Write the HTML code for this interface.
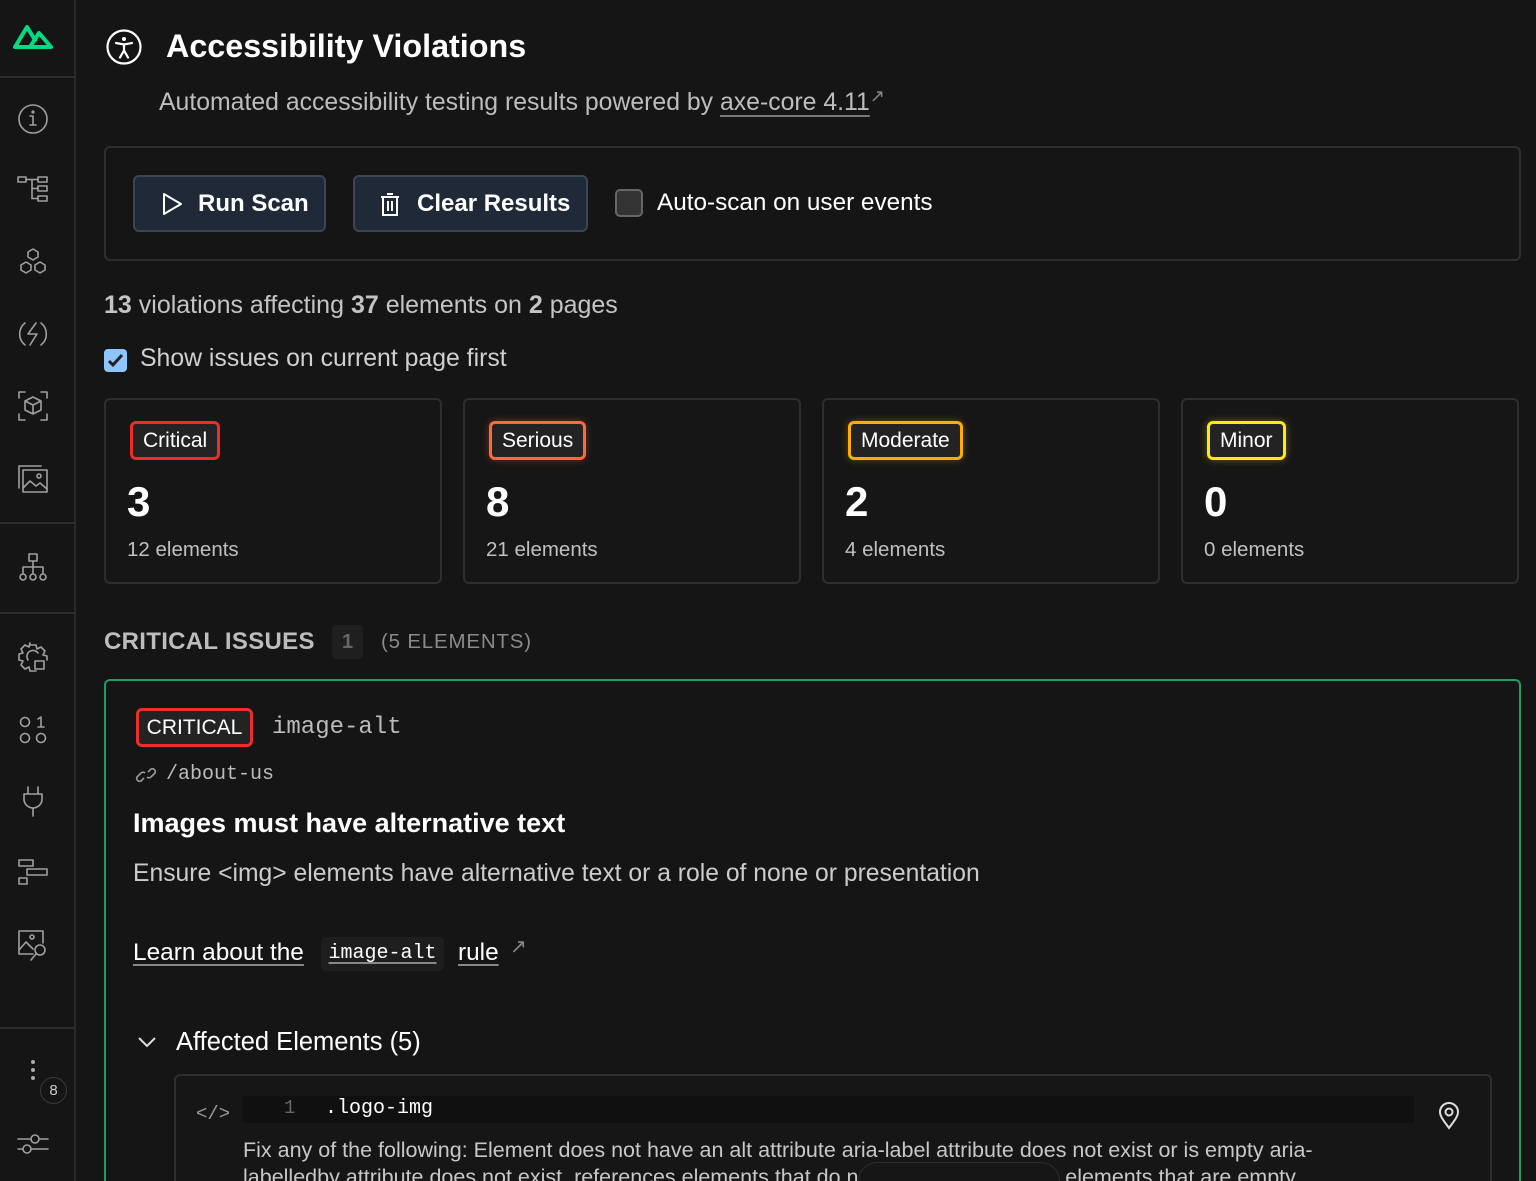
<!DOCTYPE html>
<html><head><meta charset="utf-8"><style>
*{box-sizing:border-box;margin:0;padding:0}
html{width:1536px;height:1181px;overflow:hidden}
body{width:1536px;height:1181px;overflow:hidden;background:#151515;font-family:"Liberation Sans",sans-serif;color:#e8e8e8;position:relative}
.abs{position:absolute}
.side{left:0;top:0;width:76px;height:1181px;background:#151515;border-right:2px solid #2a2a2a}
.hl{position:absolute;left:0;width:75px;height:2px;background:#2c2c2c}
.ic{position:absolute;left:16px;width:34px;height:34px}
.ic svg{width:34px;height:34px;fill:none;stroke:#a0a0a0;stroke-width:1.6;stroke-linecap:round;stroke-linejoin:round}
.box{border:2px solid #2e2e2e;border-radius:6px}
.btn{position:absolute;top:175px;height:57px;background:#1f2937;border:2px solid #3a4556;border-radius:6px;color:#fff;font-size:24px;font-weight:bold;display:flex;align-items:center}
.card{position:absolute;top:398px;width:338px;height:186px;border:2px solid #2e2e2e;border-radius:6px;background:#161616}
.badge{position:absolute;left:24px;top:21px;height:39px;border:3px solid;border-radius:6px;background:#232323;color:#fff;font-size:21px;padding:0 10px;line-height:33px}
.num{position:absolute;left:21px;top:78px;font-size:42px;font-weight:bold;color:#fff}
.el{position:absolute;left:21px;top:138px;font-size:20.5px;color:#c0c0c0}
.mono{font-family:"Liberation Mono","DejaVu Sans Mono",monospace}
</style></head><body>
<div class="abs side">
 <svg class="abs" style="left:12px;top:22px" width="42" height="28" viewBox="0 0 42 28"><path d="M3 25 L15 5 L23 18 M18 25 L27 11 L39 25 Z M3 25 H18" fill="none" stroke="#00dc82" stroke-width="4" stroke-linejoin="round" stroke-linecap="round"/></svg>
 <div class="hl" style="top:76px"></div>
 <div class="ic" style="top:102px"><svg viewBox="0 0 34 34"><circle cx="17" cy="17" r="14"/><path d="M17 14v9M14 23h6M14 14h3"/><circle cx="17" cy="10" r=".8"/></svg></div>
 <div class="ic" style="top:173px"><svg viewBox="0 0 34 34"><rect x="2" y="4" width="8" height="5"/><rect x="22" y="4" width="9" height="5"/><rect x="22" y="13" width="9" height="5"/><rect x="22" y="23" width="9" height="5"/><path d="M10 6.5h12M16 6.5v19h6M16 15.5h6"/></svg></div>
 <div class="ic" style="top:246px"><svg viewBox="0 0 34 34"><path d="M17 3l5 3v5l-5 3-5-3V6z M10 16l5 3v5l-5 3-5-3v-5z M24 16l5 3v5l-5 3-5-3v-5z"/></svg></div>
 <div class="ic" style="top:317px"><svg viewBox="0 0 34 34"><path d="M9 6a14 14 0 0 0 0 22M25 6a14 14 0 0 1 0 22M20 6l-8 11h9l-7 11"/></svg></div>
 <div class="ic" style="top:389px"><svg viewBox="0 0 34 34"><path d="M3 9V3h6M25 3h6v6M31 25v6h-6M9 31H3v-6M17 8l8 4v9l-8 4-8-4v-9zM9 12l8 4 8-4M17 16v9"/></svg></div>
 <div class="ic" style="top:461px"><svg viewBox="0 0 34 34"><path d="M3 27V5h22"/><rect x="7" y="9" width="24" height="22"/><circle cx="23" cy="15" r="2"/><path d="M7 27l7-7 6 5 4-3 7 6"/></svg></div>
 <div class="hl" style="top:522px"></div>
 <div class="ic" style="top:552px"><svg viewBox="0 0 34 34"><rect x="13" y="2" width="8" height="7"/><path d="M17 9v6M7 21v-6h20v6M17 15v6"/><circle cx="7" cy="25" r="3"/><circle cx="17" cy="25" r="3"/><circle cx="27" cy="25" r="3"/></svg></div>
 <div class="hl" style="top:612px"></div>
 <div class="ic" style="top:641px"><svg viewBox="0 0 34 34"><path d="M14 4h6l1 4 4-2 4 4-2 4 4 1v4M20 30h-6l-1-4-4 2-4-4 2-4-4-1v-6l4-1-2-4 4-4 4 2 1-4"/><path d="M12 19a6 6 0 0 1 10-7"/><rect x="19" y="20" width="9" height="8"/></svg></div>
 <div class="ic" style="top:713px"><svg viewBox="0 0 34 34"><circle cx="9" cy="9" r="4.5"/><path d="M22 6l3-2v10M22 14h6"/><circle cx="9" cy="25" r="4.5"/><circle cx="25" cy="25" r="4.5"/></svg></div>
 <div class="ic" style="top:784px"><svg viewBox="0 0 34 34"><path d="M12 3v7M22 3v7M8 10h18v5a9 9 0 0 1-18 0zM17 24v8"/></svg></div>
 <div class="ic" style="top:856px"><svg viewBox="0 0 34 34"><rect x="3" y="4" width="14" height="6"/><rect x="11" y="13" width="20" height="6"/><rect x="3" y="22" width="8" height="6"/></svg></div>
 <div class="ic" style="top:928px"><svg viewBox="0 0 34 34"><path d="M17 26H3V3h24v12"/><circle cx="16" cy="9" r="2"/><path d="M3 22l7-8 7 7"/><circle cx="24" cy="22" r="5"/><path d="M20 26l-5 6"/></svg></div>
 <div class="hl" style="top:1027px"></div>
 <div class="abs" style="left:31px;top:1060px;width:4px;height:4px;border-radius:2px;background:#aaa"></div>
 <div class="abs" style="left:31px;top:1068px;width:4px;height:4px;border-radius:2px;background:#aaa"></div>
 <div class="abs" style="left:31px;top:1076px;width:4px;height:4px;border-radius:2px;background:#aaa"></div>
 <div class="abs" style="left:40px;top:1077px;width:27px;height:27px;border-radius:14px;border:1px solid #3a3a3a;color:#ccc;font-size:15px;text-align:center;line-height:25px">8</div>
 <div class="ic" style="top:1128px"><svg viewBox="0 0 34 34"><path d="M2 11h13M23 11h9M2 21h5M15 21h17"/><circle cx="19" cy="11" r="4"/><circle cx="11" cy="21" r="4"/></svg></div>
</div>

<svg class="abs" style="left:105px;top:28px" width="38" height="38" viewBox="0 0 38 38"><g fill="none" stroke="#fff" stroke-width="2.2" stroke-linecap="round"><circle cx="19" cy="19" r="16.5"/><path d="M11 15l8 1.5 8-1.5M19 16.5v6M19 22.5l-4 7M19 22.5l4 7"/></g><circle cx="19" cy="11" r="2" fill="#fff"/></svg>
<div class="abs" style="left:166px;top:28px;font-size:32.3px;font-weight:bold;color:#fff">Accessibility Violations</div>
<div class="abs" style="left:159px;top:86px;font-size:24.8px;color:#bdbdbd">Automated accessibility testing results powered by <span style="text-decoration:underline;text-decoration-color:#777;text-underline-offset:5px">axe-core 4.11</span><span style="font-size:18px;color:#888;vertical-align:8px">↗</span></div>

<div class="abs box" style="left:104px;top:146px;width:1417px;height:115px"></div>
<div class="btn" style="left:133px;width:193px"><svg style="margin:0 15px 0 26px" width="22" height="24" viewBox="0 0 22 24"><path d="M3 2l17 10L3 22z" fill="none" stroke="#fff" stroke-width="2" stroke-linejoin="round"/></svg>Run Scan</div>
<div class="btn" style="left:353px;width:235px"><svg style="margin:0 16px 0 24px" width="22" height="26" viewBox="0 0 22 26"><path d="M2 6h18M8 3h6M4 6v18h14V6M9 10v10M13 10v10" fill="none" stroke="#fff" stroke-width="2"/></svg>Clear Results</div>
<div class="abs" style="left:615px;top:189px;width:28px;height:28px;border:2px solid #666;border-radius:5px;background:#333"></div>
<div class="abs" style="left:657px;top:189px;font-size:24.3px;color:#fff">Auto-scan on user events</div>

<div class="abs" style="left:104px;top:291px;font-size:25px;color:#c4c4c4"><b>13</b> violations affecting <b>37</b> elements on <b>2</b> pages</div>
<div class="abs" style="left:104px;top:349px;width:23px;height:23px;border-radius:4px;background:#8ec5ff"><svg width="23" height="23" viewBox="0 0 23 23"><path d="M5 12l4 4 9-10" fill="none" stroke="#222" stroke-width="3"/></svg></div>
<div class="abs" style="left:140px;top:345px;font-size:24.8px;color:#d0d0d0">Show issues on current page first</div>

<div class="card" style="left:104px"><div class="badge" style="border-color:#ef2b2b">Critical</div><div class="num">3</div><div class="el">12 elements</div></div>
<div class="card" style="left:463px"><div class="badge" style="border-color:#ff6a3d;box-shadow:0 0 8px rgba(255,106,61,.35)">Serious</div><div class="num">8</div><div class="el">21 elements</div></div>
<div class="card" style="left:822px"><div class="badge" style="border-color:#ffae00;box-shadow:0 0 8px rgba(255,174,0,.35)">Moderate</div><div class="num">2</div><div class="el">4 elements</div></div>
<div class="card" style="left:1181px"><div class="badge" style="border-color:#ffe81a;box-shadow:0 0 8px rgba(255,232,26,.35)">Minor</div><div class="num">0</div><div class="el">0 elements</div></div>

<div class="abs" style="left:104px;top:628px;font-size:24px;font-weight:bold;color:#bdbdbd;letter-spacing:.3px">CRITICAL ISSUES</div>
<div class="abs" style="left:332px;top:625px;width:31px;height:34px;border-radius:4px;background:#1f1f1f;color:#666;font-size:20px;text-align:center;line-height:34px;font-weight:bold">1</div>
<div class="abs" style="left:381px;top:630px;font-size:20.5px;color:#8a8a8a;letter-spacing:.8px">(5 ELEMENTS)</div>

<div class="abs" style="left:104px;top:679px;width:1417px;height:502px;border:2px solid #1f9e63;border-bottom:none;border-radius:6px 6px 0 0"></div>
<div class="abs" style="left:136px;top:708px;width:117px;height:39px;border:3px solid #ef2b2b;border-radius:6px;background:#232323;color:#fff;font-size:21px;text-align:center;line-height:33px">CRITICAL</div>
<div class="abs mono" style="left:272px;top:714px;font-size:24px;color:#bbb">image-alt</div>
<svg class="abs" style="left:134px;top:766px" width="24" height="18" viewBox="0 0 24 18"><g fill="none" stroke="#999" stroke-width="1.6"><path d="M10 12l-3 3a3 3 0 0 1-4-4l4-4a3 3 0 0 1 4 0M14 6l3-3a3 3 0 0 1 4 4l-4 4a3 3 0 0 1-4 0"/></g></svg>
<div class="abs mono" style="left:166px;top:763px;font-size:20px;color:#bbb">/about-us</div>
<div class="abs" style="left:133px;top:808px;font-size:27px;font-weight:bold;color:#fff">Images must have alternative text</div>
<div class="abs" style="left:133px;top:860px;font-size:24.7px;color:#ccc">Ensure &lt;img&gt; elements have alternative text or a role of none or presentation</div>
<div class="abs" style="left:133px;top:939px;font-size:24.4px;color:#fff;text-decoration:underline;text-decoration-color:#888;text-underline-offset:4px">Learn about the</div>
<div class="abs mono" style="left:321px;top:937px;width:123px;height:34px;border-radius:5px;background:#1e1e1e;font-size:20px;color:#fff;text-align:center;line-height:34px"><span style="text-decoration:underline;text-decoration-color:#888;text-underline-offset:4px">image-alt</span></div>
<div class="abs" style="left:458px;top:939px;font-size:24.4px;color:#fff;text-decoration:underline;text-decoration-color:#888;text-underline-offset:4px">rule</div>
<div class="abs" style="left:510px;top:934px;font-size:20px;color:#888">↗</div>

<svg class="abs" style="left:137px;top:1035px" width="20" height="14" viewBox="0 0 20 14"><path d="M2 3l8 8 8-8" fill="none" stroke="#ddd" stroke-width="2"/></svg>
<div class="abs" style="left:176px;top:1028px;font-size:25.5px;color:#fff">Affected Elements (5)</div>

<div class="abs" style="left:174px;top:1074px;width:1318px;height:107px;border:2px solid #2e2e2e;border-bottom:none;border-radius:6px 6px 0 0;background:#161616"></div>
<div class="abs mono" style="left:196px;top:1103px;font-size:19px;color:#999">&lt;/&gt;</div>
<div class="abs" style="left:243px;top:1096px;width:1171px;height:27px;background:#101010"></div>
<div class="abs mono" style="left:284px;top:1097px;font-size:19px;color:#666">1</div>
<div class="abs mono" style="left:325px;top:1097px;font-size:20px;color:#fff">.logo-img</div>
<svg class="abs" style="left:1438px;top:1102px" width="22" height="28" viewBox="0 0 22 28"><g fill="none" stroke="#ddd" stroke-width="2"><path d="M11 26C5 18 2 14 2 10a9 9 0 0 1 18 0c0 4-3 8-9 16z"/><circle cx="11" cy="10" r="3.5"/></g></svg>
<div class="abs" style="left:243px;top:1137px;width:1100px;height:44px;overflow:hidden;font-size:21.5px;line-height:27px;color:#c8c8c8">Fix any of the following: Element does not have an alt attribute aria-label attribute does not exist or is empty aria-labelledby attribute does not exist, references elements that do not exist or references elements that are empty Element</div>
<div class="abs" style="left:858px;top:1162px;width:202px;height:19px;border-radius:25px 25px 0 0;background:#161616;border:1px solid #2e2e2e;border-bottom:none"></div>
</body></html>
